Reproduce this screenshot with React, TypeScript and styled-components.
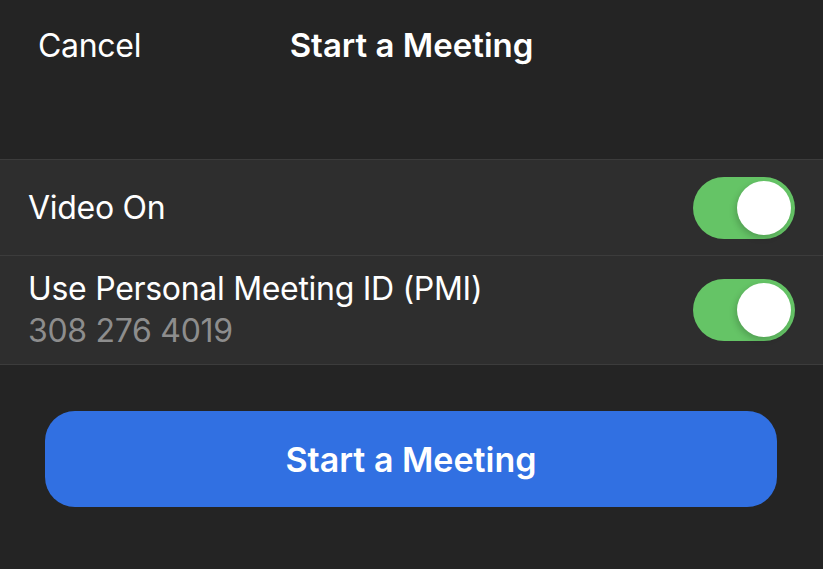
import React from "react";
import styled, { createGlobalStyle } from "styled-components";

const Global = createGlobalStyle`
  html, body { margin: 0; padding: 0; background: #242424; }
  body { font-family: Inter, "Noto Sans", sans-serif; -webkit-font-smoothing: antialiased; }
`;

const Screen = styled.div`
  width: 823px;
  height: 569px;
  background: #242424;
  color: #ffffff;
  display: flex;
  flex-direction: column;
  overflow: hidden;
`;

const Header = styled.header`
  display: grid;
  grid-template-columns: 1fr auto 1fr;
  align-items: center;
  height: 90px;
  padding: 0 38px;
  margin-bottom: 69px;
`;

const HeaderButton = styled.span`
  font-size: 32px;
  font-weight: 400;
  letter-spacing: -0.3px;
  justify-self: start;
`;

const Title = styled.h1`
  margin: 0;
  font-size: 33px;
  font-weight: 600;
  letter-spacing: 0;
`;

const List = styled.section`
  background: #2e2e2e;
  border-top: 1px solid #3c3c3c;
  border-bottom: 1px solid #3c3c3c;
`;

const Row = styled.div<{ $height: number; $divider?: boolean }>`
  display: flex;
  align-items: center;
  justify-content: space-between;
  height: ${(p) => p.$height}px;
  padding: 0 28px;
  box-sizing: border-box;
  border-bottom: ${(p) => (p.$divider ? "1px solid #3c3c3c" : "none")};
`;

const Labels = styled.div`
  display: flex;
  flex-direction: column;
  gap: 4px;
`;

const Label = styled.span`
  font-size: 32px;
  letter-spacing: -0.3px;
  line-height: 38px;
`;

const Sub = styled.span`
  font-size: 32px;
  letter-spacing: -0.3px;
  line-height: 38px;
  color: #8d8d8d;
`;

const Track = styled.div`
  width: 102px;
  height: 62px;
  border-radius: 31px;
  background: #65c466;
  display: flex;
  align-items: center;
  justify-content: flex-end;
  padding: 0 4px;
  box-sizing: border-box;
`;

const Knob = styled.div`
  width: 54px;
  height: 54px;
  border-radius: 50%;
  background: #ffffff;
  box-shadow: -2px 3px 6px rgba(0, 0, 0, 0.18);
`;

const Toggle = () => (
  <Track>
    <Knob />
  </Track>
);

const PrimaryButton = styled.button`
  margin: 46px 46px 0 45px;
  height: 96px;
  border: none;
  border-radius: 30px;
  background: #3170e2;
  color: #ffffff;
  font-family: Inter, "Noto Sans", sans-serif;
  font-size: 34px;
  font-weight: 600;
  letter-spacing: 0;
`;

export default function App() {
  return (
    <>
      <Global />
      <Screen>
        <Header>
          <HeaderButton>Cancel</HeaderButton>
          <Title>Start a Meeting</Title>
          <span />
        </Header>
        <List>
          <Row $height={96} $divider>
            <Label>Video On</Label>
            <Toggle />
          </Row>
          <Row $height={108}>
            <Labels>
              <Label>Use Personal Meeting ID (PMI)</Label>
              <Sub>308 276 4019</Sub>
            </Labels>
            <Toggle />
          </Row>
        </List>
        <PrimaryButton>Start a Meeting</PrimaryButton>
      </Screen>
    </>
  );
}
